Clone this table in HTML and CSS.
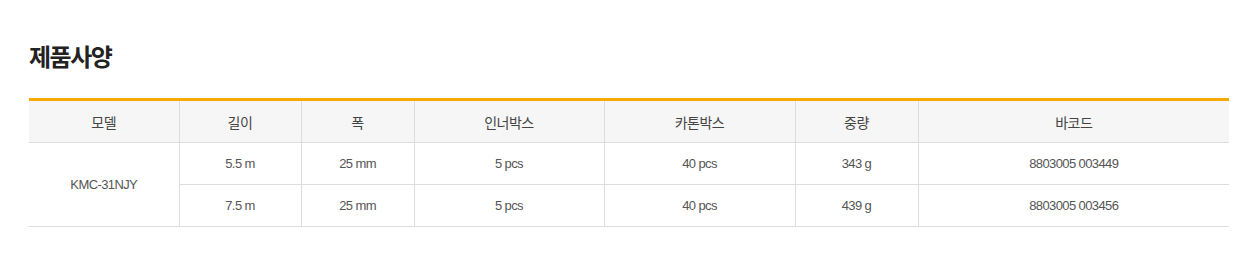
FILE: index.html
```html
<!DOCTYPE html>
<html lang="ko">
<head>
<meta charset="utf-8">
<title>제품사양</title>
<link rel="stylesheet" href="styles.css">
</head>
<body>
<div class="spec">
  <h2 class="spec-title">제품사양</h2>
  <table class="spec-table">
    <colgroup>
      <col class="c1"><col class="c2"><col class="c3"><col class="c4"><col class="c5"><col class="c6"><col class="c7">
    </colgroup>
    <thead>
      <tr>
        <th>모델</th><th>길이</th><th>폭</th><th>인너박스</th><th>카톤박스</th><th>중량</th><th>바코드</th>
      </tr>
    </thead>
    <tbody>
      <tr>
        <td rowspan="2" class="first">KMC-31NJY</td>
        <td>5.5 m</td><td>25 mm</td><td>5 pcs</td><td>40 pcs</td><td>343 g</td><td class="last">8803005 003449</td>
      </tr>
      <tr>
        <td>7.5 m</td><td>25 mm</td><td>5 pcs</td><td>40 pcs</td><td>439 g</td><td class="last">8803005 003456</td>
      </tr>
    </tbody>
  </table>
</div>
</body>
</html>
```
FILE: styles.css
```css
html, body {
  margin: 0;
  padding: 0;
  background: #fff;
}
.spec {
  width: 1200px;
  margin-left: 29px;
  padding-top: 41px;
}
.spec-title {
  margin: 0 0 27px;
  font-family: "Noto Sans CJK KR", "Noto Sans", sans-serif;
  font-size: 24px;
  line-height: 30px;
  font-weight: 700;
  letter-spacing: -1.5px;
  color: #222;
}
.spec-table {
  width: 1200px;
  border-collapse: collapse;
  table-layout: fixed;
  border-top: 3px solid #f8a900;
}
.c1 { width: 150px; }
.c2 { width: 122px; }
.c3 { width: 113px; }
.c4 { width: 190px; }
.c5 { width: 191px; }
.c6 { width: 123px; }
.c7 { width: 311px; }
.spec-table th {
  height: 41px;
  padding: 0;
  background: #f6f6f6;
  font-family: "Noto Sans CJK KR", "Noto Sans", sans-serif;
  font-size: 14px;
  font-weight: 400;
  letter-spacing: -0.5px;
  color: #444;
  text-align: center;
  border-bottom: 1px solid #ddd;
  border-left: 1px solid #ddd;
}
.spec-table th:first-child { border-left: none; }
.spec-table td {
  height: 41px;
  padding: 0;
  font-family: "Liberation Sans", Arial, sans-serif;
  font-size: 13px;
  letter-spacing: -0.6px;
  color: #555;
  text-align: center;
  border-bottom: 1px solid #ddd;
  border-left: 1px solid #ddd;
}
.spec-table td.first { border-left: none; }
```
